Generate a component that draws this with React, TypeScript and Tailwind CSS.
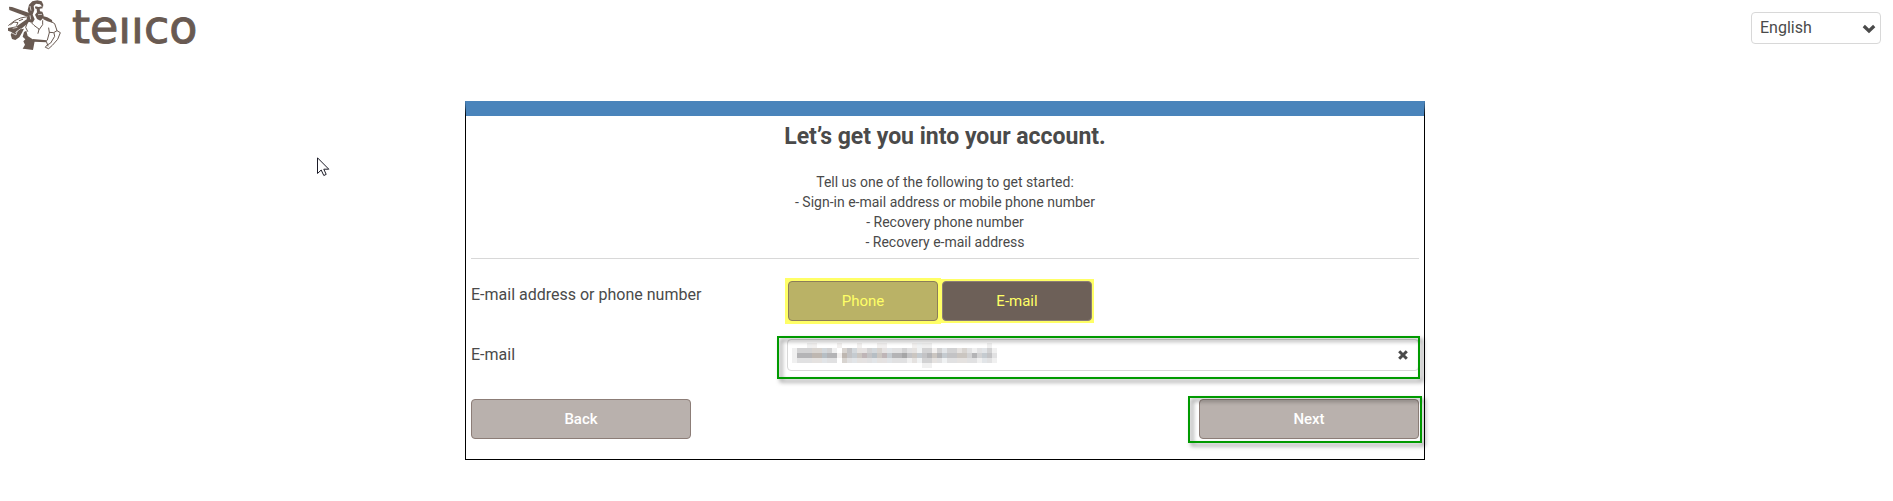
import React from 'react';

const INSTRUCTIONS = [
  'Tell us one of the following to get started:',
  '- Sign-in e-mail address or mobile phone number',
  '- Recovery phone number',
  '- Recovery e-mail address',
];

// one string per row, one digit per 5px tile, 0 is clear and 9 is darkest
const MOSAIC_ROWS = [
  '00011000010001000110000011110000000000010',
  '13333333103432233322223221331323323212231',
  '15555555515444545454556444454544444353442',
  '12222222203222222222222121332212222221221',
  '00000000000000000000000000110000000000000',
];
const MOSAIC_TINTS = 'ggggttbggttgbtpgbtpbggggtbggtgbggttgggbgg';
const TINT_COLORS: Record<string, string> = {
  g: '#6a6a6d',
  t: '#7d7064',
  b: '#6d7d8a',
  p: '#7f6c70',
};

function RedactedValue() {
  return (
    <svg
      width="205"
      height="25"
      viewBox="0 0 205 25"
      shapeRendering="crispEdges"
      aria-hidden="true"
      className="pointer-events-none absolute top-1 left-[5px]"
    >
      {MOSAIC_ROWS.map((row, y) =>
        row.split('').map((level, x) => (
          <rect
            key={`${x}-${y}`}
            x={x * 5}
            y={y * 5}
            width="5"
            height="5"
            fill={TINT_COLORS[MOSAIC_TINTS[x]]}
            fillOpacity={Number(level) * 0.1}
          />
        )),
      )}
    </svg>
  );
}

function Figure() {
  return (
    <svg width="70" height="55" viewBox="0 0 210 165" className="shrink-0" aria-hidden="true">
      <g fill="#695a52">
        {/* crossbow */}
        <path d="M27 20 L36 21 L88 39 L86 49 L76 48 L28 30 Z" />
        <path d="M24 84 L50 79 L80 58 L90 62 L80 73 L62 88 L72 86 L66 98 L58 112 L46 120 L36 117 L32 104 L36 97 L24 92 Z" />
        {/* hair */}
        <path d="M82 64 L80 54 L87 42 L83 30 L87 14 L97 4 L112 1 L125 4 L130 14 L129 22 L120 13 L108 11 L101 18 L103 30 L98 44 L104 58 L98 68 L88 66 Z" />
        {/* eyes, nose and beard */}
        <path d="M106 19 L116 21 L127 19 L128 25 L119 26 L120 34 L127 35 L131 46 L128 56 L121 62 L111 57 L105 44 L111 37 L110 27 L105 25 Z" />
        {/* satchel and sword */}
        <path d="M72 96 L79 92 L83 108 L98 118 L104 124 L99 150 L76 147 L68 146 L75 134 L70 124 L76 118 L68 110 Z" />
        <path d="M128 48 L142 52 L156 60 L157 68 L142 64 L130 58 Z" />
        <path d="M98 117 L141 121 L140 127 L100 125 Z" />
      </g>
      <g fill="none" stroke="#695a52" strokeWidth="3" strokeLinecap="round" strokeLinejoin="round">
        <path d="M26 76 L44 62 L62 54 L82 50" />
        <path d="M32 74 L42 66 L54 68 L50 76 M58 62 L68 58" />
        <path d="M82 68 L77 82 L83 94" />
        <path d="M94 68 L102 76 L118 88 L128 74 L128 62" />
        <path d="M117 88 L114 100" />
        <path d="M154 65 L164 71 L171 92 L161 98 L148 97" />
        <path d="M146 84 L148 98 L142 120" />
        <path d="M171 92 L181 98 L173 118 L157 136 L146 146 L136 142 L140 136 L152 129 L164 109 L162 99" />
        <path d="M140 127 L144 138" />
      </g>
      <g stroke="#fff" strokeWidth="2" fill="none">
        <path d="M38 85 L52 82 M46 98 L62 86 M90 18 L93 32 M114 44 L126 43 M90 46 L92 58" />
        <path d="M36 99 L48 105 L52 92" />
      </g>
    </svg>
  );
}

function Cursor() {
  return (
    <svg
      width="13"
      height="20"
      viewBox="0 0 13 20"
      aria-hidden="true"
      className="pointer-events-none absolute top-[157px] left-[317px]"
    >
      <path
        d="M0.5 0.8 V16.5 L4.2 13 L6.8 18.5 L9.2 17.4 L6.8 12.2 H11.8 Z"
        fill="#fff"
        stroke="#1c1c28"
      />
    </svg>
  );
}

function Marker({ className }: { className: string }) {
  return (
    <div
      className={`pointer-events-none absolute border-2 border-[#009a00] drop-shadow-[3px_3px_2px_rgba(0,0,0,0.5)] ${className}`}
    />
  );
}

export default function App() {
  return (
    <div className="relative min-h-screen bg-white font-[Roboto,sans-serif] text-base text-[#4a4a4a]">
      <header className="flex items-start justify-between pr-3">
        <a href="#" aria-label="tellco" className="flex items-start gap-0.5 text-[#695a52]">
          <Figure />
          <span className="font-['DejaVu_Sans',sans-serif] text-[46px] leading-[54px] [-webkit-text-stroke:1px_#695a52]">
            teııco
          </span>
        </a>
        <div className="relative mt-3">
          <select
            aria-label="Language"
            className="block h-8 w-[130px] appearance-none rounded-sm border border-[#d8d8d8] bg-white pl-2 text-base"
          >
            <option>English</option>
          </select>
          <svg
            width="14"
            height="10"
            viewBox="0 0 14 10"
            aria-hidden="true"
            className="pointer-events-none absolute top-3 right-[5px]"
          >
            <path d="M1.8 2 L7 7 L12.2 2" fill="none" stroke="#4a4a4a" strokeWidth="3.2" />
          </svg>
        </div>
      </header>

      <main className="mt-[46px] pr-[3px]">
        <form
          onSubmit={(e) => e.preventDefault()}
          className="mx-auto max-w-[960px] border border-t-[15px] border-black border-t-[#4a84bb] px-[5px] pt-[5px] pb-5"
        >
          <h1 className="text-center text-[23px] leading-8 font-bold">Let’s get you into your account.</h1>
          <div className="mt-[19px] border-b border-[#d8d8d8] pb-1.5 text-center text-sm">
            {INSTRUCTIONS.map((line) => (
              <p key={line}>{line}</p>
            ))}
          </div>

          <div className="mt-[22px] grid grid-cols-3" role="group" aria-labelledby="contact-kind">
            <span id="contact-kind" className="pt-0.5">
              E-mail address or phone number
            </span>
            <div className="col-span-2 flex gap-1 pl-px text-[15px] text-[#ffff66]">
              <span className="bg-[#ffff66] ring-3 ring-[#ffff66]">
                <button type="button" className="block h-10 w-[150px] rounded-sm border border-[#8c7d5a] bg-[#bab266]">
                  Phone
                </button>
              </span>
              <span className="bg-[#ffff66] ring-2 ring-[#ffff66]">
                <button type="button" className="block h-10 w-[150px] rounded-sm border border-[#8c7d77] bg-[#6d6058]">
                  E-mail
                </button>
              </span>
            </div>
          </div>

          <div className="mt-[18px] grid grid-cols-3 items-center">
            <label htmlFor="email">E-mail</label>
            <div className="relative col-span-2">
              <input
                id="email"
                type="email"
                className="block h-8 w-full rounded-sm border border-[#d8d8d8] bg-white pr-8 pl-2"
              />
              <RedactedValue />
              <button type="button" aria-label="Clear" className="absolute top-[11px] right-[11px]">
                <svg width="10" height="10" viewBox="0 0 10 10" aria-hidden="true">
                  <path d="M1.2 1.2 L8.8 8.8 M8.8 1.2 L1.2 8.8" stroke="#4a4a4a" strokeWidth="3" />
                </svg>
              </button>
              <Marker className="-top-[3px] -right-px -bottom-2 -left-[10px]" />
            </div>
          </div>

          <div className="mt-7 flex justify-between text-[15px] font-medium text-white">
            <button type="button" className="h-10 w-[220px] rounded-sm border border-[#8c7d77] bg-[#b9b1ad]">
              Back
            </button>
            <div className="relative">
              <button type="submit" className="block h-10 w-[220px] rounded-sm border border-[#8c7d77] bg-[#b9b1ad]">
                Next
              </button>
              <Marker className="-top-[3px] -right-[3px] -bottom-1 -left-[11px]" />
            </div>
          </div>
        </form>
      </main>

      <Cursor />
    </div>
  );
}
